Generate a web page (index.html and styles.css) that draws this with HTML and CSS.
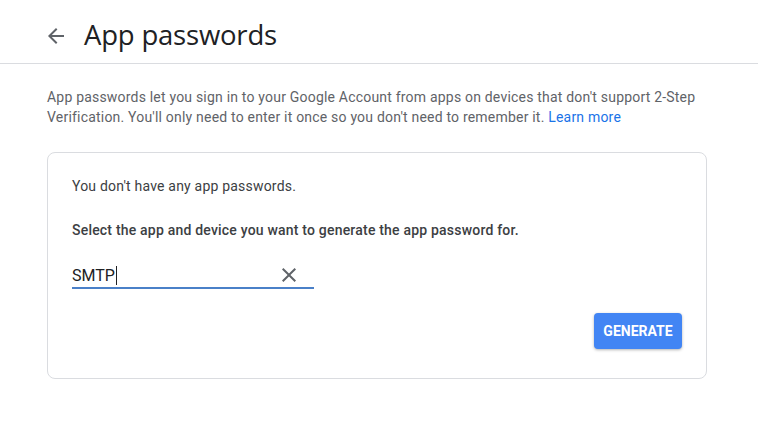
FILE: index.html
```html
<!DOCTYPE html>
<html lang="en">
<head>
  <meta charset="UTF-8">
  <meta name="viewport" content="width=device-width, initial-scale=1.0">
  <title>App passwords</title>
  <link rel="stylesheet" href="styles.css">
</head>
<body>
  <header class="topbar">
    <a class="back" href="#" aria-label="Back">
      <svg width="24" height="24" viewBox="0 0 24 24"><path d="M20 11H7.83l5.59-5.59L12 4l-8 8 8 8 1.41-1.41L7.83 13H20v-2z" fill="#5f6368"/></svg>
    </a>
    <h1>App passwords</h1>
  </header>

  <main class="content">
    <p class="intro">App passwords let you sign in to your Google Account from apps on devices that don't support 2-Step Verification. You'll only need to enter it once so you don't need to remember it. <a href="#">Learn more</a></p>

    <div class="card">
      <p class="empty">You don't have any app passwords.</p>
      <p class="select">Select the app and device you want to generate the app password for.</p>

      <div class="field">
        <span class="value">SMTP<span class="caret"></span></span>
        <button class="clear" aria-label="Clear">
          <svg width="24" height="24" viewBox="0 0 24 24"><path d="M19 6.41L17.59 5 12 10.59 6.41 5 5 6.41 10.59 12 5 17.59 6.41 19 12 13.41 17.59 19 19 17.59 13.41 12z" fill="#5f6368"/></svg>
        </button>
      </div>

      <div class="actions">
        <button class="generate">GENERATE</button>
      </div>
    </div>
  </main>
</body>
</html>
```

FILE: styles.css
```css
body {
  margin: 0;
  font-family: Roboto, Arial, sans-serif;
  background: #fff;
  color: #3c4043;
}
.topbar {
  height: 63px;
  border-bottom: 1px solid #dadce0;
  display: flex;
  align-items: center;
  padding-left: 44px;
  box-sizing: content-box;
}
.back {
  display: flex;
  width: 24px;
  height: 24px;
  margin-right: 16px;
  margin-top: 9px;
}
.topbar h1 {
  margin: 6px 0 0;
  font-family: "Open Sans", Roboto, sans-serif;
  font-weight: 400;
  font-size: 27.5px;
  color: #202124;
  letter-spacing: -0.2px;
}
.content {
  width: 660px;
  margin-left: 47px;
}
.intro {
  margin: 23px 0 25px;
  font-size: 14px;
  line-height: 20px;
  letter-spacing: 0.2px;
  color: #5f6368;
}
.intro a {
  color: #1a73e8;
  text-decoration: none;
}
.card {
  border: 1px solid #dadce0;
  border-radius: 8px;
  padding: 23px 24px 29px;
}
.card p {
  margin: 0;
  font-size: 14px;
  line-height: 20px;
  letter-spacing: 0.2px;
}
.empty {
  color: #3c4043;
}
.select {
  margin-top: 24px !important;
  font-weight: 500;
  color: #3c4043;
}
.field {
  width: 242px;
  height: 34px;
  margin-top: 15px;
  border-bottom: 2px solid #4a80c8;
  display: flex;
  align-items: center;
  justify-content: space-between;
  box-sizing: border-box;
}
.value {
  font-size: 16px;
  color: #202124;
  display: flex;
  align-items: center;
  margin-top: 8px;
}
.caret {
  display: inline-block;
  width: 1px;
  height: 19px;
  background: #202124;
  margin-left: 1px;
}
.clear {
  border: none;
  background: none;
  padding: 0;
  margin-right: 13px;
  margin-top: 8px;
  display: flex;
  cursor: pointer;
}
.actions {
  display: flex;
  justify-content: flex-end;
  margin-top: 24px;
}
.generate {
  height: 36px;
  padding: 0 8px;
  min-width: 88px;
  background: #4285f4;
  color: #fff;
  border: none;
  border-radius: 4px;
  font-family: Roboto, Arial, sans-serif;
  font-weight: 700;
  font-size: 14px;
  box-shadow: 0 1px 3px rgba(0, 0, 0, 0.3);
  cursor: pointer;
}
```
